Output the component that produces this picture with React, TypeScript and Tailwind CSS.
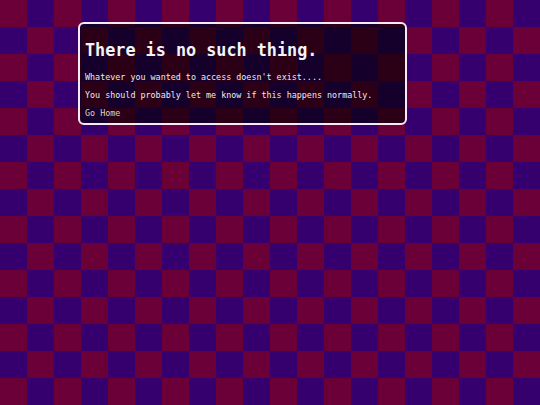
import React from 'react';

// 404-style page on a checkered background
const App: React.FC = () => {
  return (
    <div
      className="min-h-screen w-full pt-[22px] pl-[78px] bg-[conic-gradient(#35006e_25%,#6b0038_0_50%,#35006e_0_75%,#6b0038_0)] bg-size-[54px_54px] text-white"
      style={{ fontFamily: '"DejaVu Sans Mono", "Liberation Mono", monospace' }}
    >
      <div className="w-[329px] rounded-[6px] border-2 border-[#f6eaf6] bg-black/60 p-[5px]">
        <h1 className="my-[11.3px] text-[16.8px] leading-[20px] font-bold text-[#f4f4f4]">There is no such thing.</h1>
        <p className="my-[8.4px] text-[8.4px] leading-[10px] text-[#ececec]">Whatever you wanted to access doesn't exist....</p>
        <p className="my-[8.4px] text-[8.4px] leading-[10px] text-[#ececec]">You should probably let me know if this happens normally.</p>
        <a href="#" className="block text-[8.4px] leading-[10px] text-[#e6cdb8]">
          Go Home
        </a>
      </div>
    </div>
  );
};

export default App;
